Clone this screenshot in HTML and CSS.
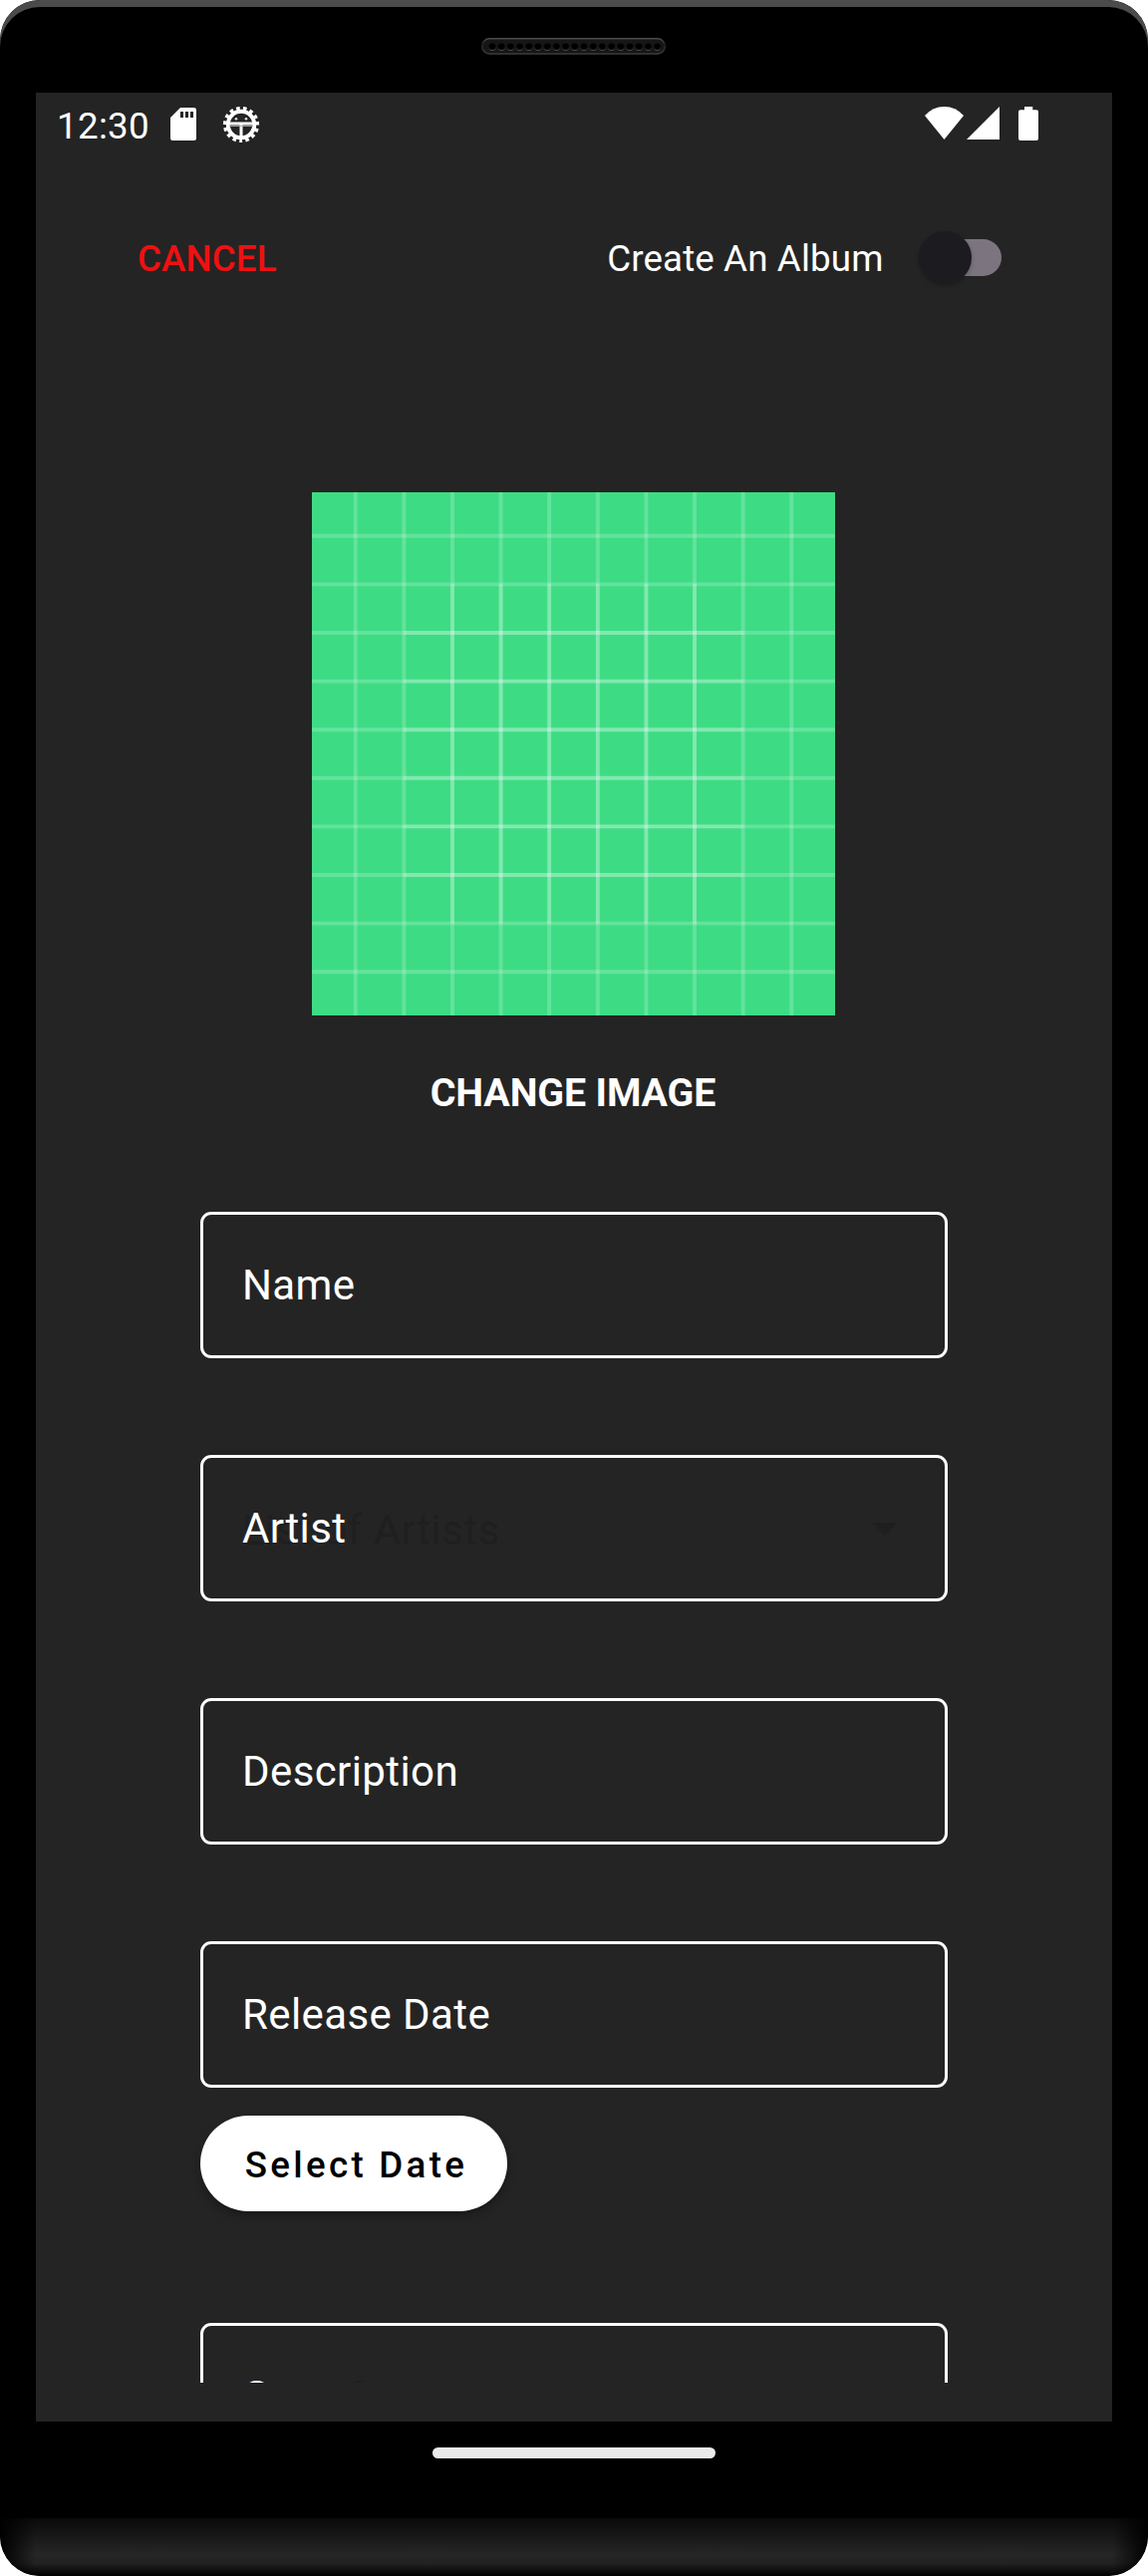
FILE: index.html
```html
<!DOCTYPE html>
<html lang="en">
<head>
<meta charset="utf-8">
<title>Create Song</title>
<link rel="stylesheet" href="styles.css">
</head>
<body>
<div class="phone">
  <div class="top-bezel">
    <svg class="speaker" width="185" height="17" viewBox="0 0 185 17">
      <defs>
        <linearGradient id="rim" x1="0" y1="0" x2="0" y2="1">
          <stop offset="0" stop-color="#4c4c4c"/><stop offset=".4" stop-color="#222"/><stop offset="1" stop-color="#3c3c3c"/>
        </linearGradient>
        <linearGradient id="hole" x1="0" y1="0" x2="0" y2="1">
          <stop offset=".4" stop-color="#111"/><stop offset="1" stop-color="#555"/>
        </linearGradient>
        <pattern id="holes" x="6.4" y="4" width="9.2" height="10" patternUnits="userSpaceOnUse">
          <circle cx="4.6" cy="5.3" r="3.7" fill="url(#hole)"/><circle cx="4.6" cy="4.7" r="3.3" fill="#000"/>
        </pattern>
      </defs>
      <rect x=".75" y=".75" width="183.5" height="15.3" rx="7.6" fill="#161616" stroke="url(#rim)" stroke-width="1.5"/>
      <rect x="6.4" y="4" width="174.8" height="10" fill="url(#holes)"/>
    </svg>
  </div>

  <main class="screen">
    <div class="status-bar">
      <span class="clock">12:30</span>
      <svg class="sd" width="26" height="33" viewBox="0 0 26 33"><path fill="#fff" fill-rule="evenodd" d="M10 0H23.5Q26 0 26 2.5V30.5Q26 33 23.5 33H2.5Q0 33 0 30.5V10ZM10 4V10H13V4ZM15 4V10H18V4ZM20 4V10H23V4Z"/></svg>
      <svg class="debug" width="38" height="38" viewBox="-19 -19 38 38">
        <circle r="15.9" fill="none" stroke="#fff" stroke-width="4.4" stroke-dasharray="3.5 3.16" stroke-dashoffset="1.75" transform="rotate(90)"/>
        <circle r="13.2" fill="none" stroke="#fff" stroke-width="4"/>
        <path d="M-12-1H12M0 0V12" stroke="#fff" stroke-width="3"/>
        <path d="M-12 1.4H12" stroke="#aaa" stroke-width="1"/>
        <circle cx="-5" cy="-5.7" r="1.3" fill="#ddd"/><circle cx="5" cy="-5.7" r="1.3" fill="#ddd"/>
      </svg>
      <span class="spacer"></span>
      <svg class="wifi" width="39" height="33" viewBox="0 0 39 33"><path fill="#fff" d="M0 9Q8 0 19.5 0T39 9L19.5 33Z"/></svg>
      <svg class="signal" width="33" height="33" viewBox="0 0 33 33"><path fill="#fff" d="M33 0V33H0Z"/></svg>
      <svg class="battery" width="20" height="34" viewBox="0 0 20 34"><path fill="#fff" d="M6 0H14.3V3.3H18Q20 3.3 20 5.3V32Q20 34 18 34H2Q0 34 0 32V5.3Q0 3.3 2 3.3H6Z"/></svg>
    </div>

    <header class="toolbar">
      <span class="cancel">CANCEL</span>
      <span class="spacer"></span>
      <span class="album">Create An Album</span>
      <span class="switch"><span class="thumb"></span></span>
    </header>

    <section class="form">
      <svg class="cover" width="525" height="525" viewBox="0 0 108 108">
        <path fill="#3ddc84" d="M0 0H108V108H0z"/>
        <path stroke="#fff" stroke-opacity=".2" stroke-width=".8" d="M9 0V108M19 0V108M29 0V108M39 0V108M49 0V108M59 0V108M69 0V108M79 0V108M89 0V108M99 0V108"/>
        <path stroke="#fff" stroke-opacity=".2" stroke-width=".8" d="M0 9H108M0 19H108M0 29H108M0 39H108M0 49H108M0 59H108M0 69H108M0 79H108M0 89H108M0 99H108"/>
        <path stroke="#fff" stroke-opacity=".2" stroke-width=".8" d="M19 29H89M19 39H89M19 49H89M19 59H89M19 69H89M19 79H89"/>
        <path stroke="#fff" stroke-opacity=".2" stroke-width=".8" d="M29 19V89M39 19V89M49 19V89M59 19V89M69 19V89M79 19V89"/>
      </svg>
      <div class="change">CHANGE IMAGE</div>
      <div class="field"><span class="label">Name</span></div>
      <div class="field">
        <span class="value">List of Artists</span><span class="label">Artist</span>
        <svg class="arrow" width="26" height="13" viewBox="0 0 26 13"><path fill="#1f1f21" d="M0 0H26L13 13Z"/></svg>
      </div>
      <div class="field"><span class="label">Description</span></div>
      <div class="field last"><span class="label">Release Date</span></div>
      <div class="button">Select Date</div>
      <div class="field"><span class="value">List of Genres</span><span class="label">Genre</span></div>
    </section>
  </main>

  <div class="nav"><span class="pill"></span></div>
  <div class="chin"></div>
</div>
</body>
</html>
```
FILE: styles.css
```css
* { box-sizing: border-box; }
body { margin: 0; background: #fff; font-family: Roboto, sans-serif; color: #fff; }
svg { display: block; flex: none; }
.spacer { flex: 1; }

.phone {
  width: 1152px; height: 2585px; background: #000; border-radius: 40px;
  overflow: hidden; display: flex; flex-direction: column;
}
.top-bezel {
  height: 93px; flex: none; display: flex; justify-content: center; padding: 38px 1px 0 0;
  border-radius: 40px 40px 0 0; box-shadow: inset 0 7px 0 #4b4b4b;
}

.screen {
  height: 2337px; flex: none; margin: 0 36px; background: #242424;
  display: flex; flex-direction: column;
}
.status-bar {
  height: 66px; flex: none; display: flex; align-items: center;
  padding: 0 74px 0 21px; font-size: 36.75px;
}
.clock { width: 114px; line-height: 60px; padding-top: 2px; letter-spacing: .3px; }
.sd { margin: -3px 26px 0 0; }
.debug { margin-top: -3px; }
.wifi { margin-top: -5px; }
.signal { margin: -5px 19px 0 3px; }
.battery { margin-top: -4px; }

.toolbar {
  height: 200px; flex: none; display: flex; align-items: center;
  padding: 0 111px 0 102px; font-size: 36.75px; line-height: 60px;
}
.cancel { color: #ee1111; font-weight: 500; padding-top: 2px; letter-spacing: .1px; }
.album { margin-right: 48.5px; padding-top: 2px; letter-spacing: .12px; }
.switch {
  width: 70px; height: 37px; border-radius: 19px; background: #7c7580;
  display: flex; align-items: center; margin-bottom: 1px;
}
.thumb {
  width: 53px; height: 53px; flex: none; margin-left: -13px; border-radius: 50%;
  background: #1c1b1f; box-shadow: 0 2px 4px rgba(0, 0, 0, .25);
}

.form {
  height: 2032px; flex: none; overflow: hidden; padding: 135px 165px 0;
  display: flex; flex-direction: column;
}
.cover { align-self: center; margin-right: 1px; }
.change {
  height: 197px; flex: none; padding: 48px 2px 0 0; text-align: center;
  font-size: 39.375px; font-weight: 700; line-height: 60px; letter-spacing: -.15px;
}
.field {
  position: relative; height: 147px; flex: none; margin-bottom: 97px;
  border: 3px solid #fff; border-radius: 11px; padding: 41px 39px;
  font-size: 42px; line-height: 60px; letter-spacing: .4px;
  display: flex; align-items: flex-start;
}
.field.last { margin-bottom: 28px; }
.value { position: absolute; left: 39px; top: 43px; color: #1f1f21; letter-spacing: .5px; }
.label { position: relative; }
.arrow { position: absolute; left: 671px; top: 65px; }
.button {
  width: 308px; height: 96px; flex: none; margin-bottom: 112px; border-radius: 48px;
  background: #fff; color: #000; text-align: center; font-size: 36.75px; font-weight: 500;
  padding-left: 5px; line-height: 99px; letter-spacing: 3.28px; box-shadow: 0 5px 10px rgba(0, 0, 0, .3);
}

.nav { height: 97px; flex: none; display: flex; justify-content: center; padding-top: 26px; }
.pill { width: 284px; height: 11px; border-radius: 6px; background: #ebebeb; }
.chin {
  height: 58px; flex: none; border-radius: 0 0 40px 40px;
  background: linear-gradient(90deg, #000, transparent 36px, transparent 1116px, #000),
    linear-gradient(#0a0a0a, #262626 63%, #222 78%, #000);
}
```
